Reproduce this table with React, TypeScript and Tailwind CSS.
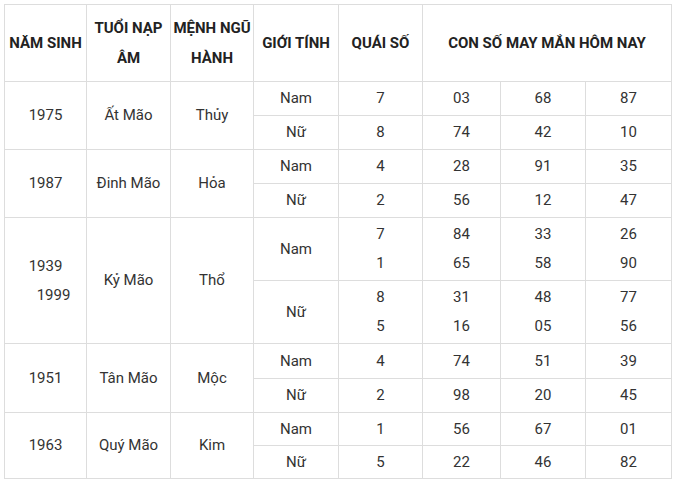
const rows = [
  {
    year: ["1975"],
    tuoi: "Ất Mão",
    menh: "Thủy",
    sub: [
      { gt: "Nam", qs: ["7"], nums: [["03"], ["68"], ["87"]] },
      { gt: "Nữ", qs: ["8"], nums: [["74"], ["42"], ["10"]] },
    ],
    h: ["h-[34px]", "h-[34px]"],
  },
  {
    year: ["1987"],
    tuoi: "Đinh Mão",
    menh: "Hỏa",
    sub: [
      { gt: "Nam", qs: ["4"], nums: [["28"], ["91"], ["35"]] },
      { gt: "Nữ", qs: ["2"], nums: [["56"], ["12"], ["47"]] },
    ],
    h: ["h-[34px]", "h-[34px]"],
  },
  {
    year: ["1939", "1999"],
    tuoi: "Kỷ Mão",
    menh: "Thổ",
    sub: [
      { gt: "Nam", qs: ["7", "1"], nums: [["84", "65"], ["33", "58"], ["26", "90"]] },
      { gt: "Nữ", qs: ["8", "5"], nums: [["31", "16"], ["48", "05"], ["77", "56"]] },
    ],
    h: ["h-[63px]", "h-[63px]"],
  },
  {
    year: ["1951"],
    tuoi: "Tân Mão",
    menh: "Mộc",
    sub: [
      { gt: "Nam", qs: ["4"], nums: [["74"], ["51"], ["39"]] },
      { gt: "Nữ", qs: ["2"], nums: [["98"], ["20"], ["45"]] },
    ],
    h: ["h-[35px]", "h-[34px]"],
  },
  {
    year: ["1963"],
    tuoi: "Quý Mão",
    menh: "Kim",
    sub: [
      { gt: "Nam", qs: ["1"], nums: [["56"], ["67"], ["01"]] },
      { gt: "Nữ", qs: ["5"], nums: [["22"], ["46"], ["82"]] },
    ],
    h: ["h-[33px]", "h-[33px]"],
  },
];

const cell = "border border-[#dddddd] p-0 text-center align-middle";

const Lines = ({ items }: { items: string[] }) => (
  <>
    {items.map((t, i) => (
      <div key={i} className="leading-[29px]">
        {t}
      </div>
    ))}
  </>
);

export default function App() {
  return (
    <div className="bg-white w-[678px] h-[486px] pt-1 pl-1 font-['Roboto','Liberation_Sans',sans-serif] text-[15px] text-[#333333]">
      <table className="border-collapse table-fixed w-[668px]">
        <colgroup>
          <col className="w-[82px]" />
          <col className="w-[84px]" />
          <col className="w-[83px]" />
          <col className="w-[85px]" />
          <col className="w-[84px]" />
          <col className="w-[78px]" />
          <col className="w-[85px]" />
          <col className="w-[86px]" />
        </colgroup>
        <thead>
          <tr className="h-[77px] font-bold text-[#222222] leading-[30px]">
            <th className={cell + " whitespace-nowrap"}>NĂM SINH</th>
            <th className={cell}>
              TUỔI NẠP
              <br />
              ÂM
            </th>
            <th className={cell}>
              MỆNH NGŨ
              <br />
              HÀNH
            </th>
            <th className={cell + " whitespace-nowrap"}>GIỚI TÍNH</th>
            <th className={cell + " whitespace-nowrap"}>QUÁI SỐ</th>
            <th className={cell + " whitespace-nowrap"} colSpan={3}>
              CON SỐ MAY MẮN HÔM NAY
            </th>
          </tr>
        </thead>
        <tbody>
          {rows.map((r) =>
            r.sub.map((s, i) => (
              <tr key={r.tuoi + i} className={r.h[i]}>
                {i === 0 && (
                  <>
                    <td className={cell} rowSpan={2}>
                      {r.year.length > 1 ? (
                        <>
                          <div className="leading-[29px]">{r.year[0]}</div>
                          <div className="leading-[29px] pl-4">{r.year[1]}</div>
                        </>
                      ) : (
                        r.year[0]
                      )}
                    </td>
                    <td className={cell} rowSpan={2}>
                      {r.tuoi}
                    </td>
                    <td className={cell} rowSpan={2}>
                      {r.menh}
                    </td>
                  </>
                )}
                <td className={cell}>{s.gt}</td>
                <td className={cell}>
                  <Lines items={s.qs} />
                </td>
                {s.nums.map((n, j) => (
                  <td key={j} className={cell}>
                    <Lines items={n} />
                  </td>
                ))}
              </tr>
            ))
          )}
        </tbody>
      </table>
    </div>
  );
}
